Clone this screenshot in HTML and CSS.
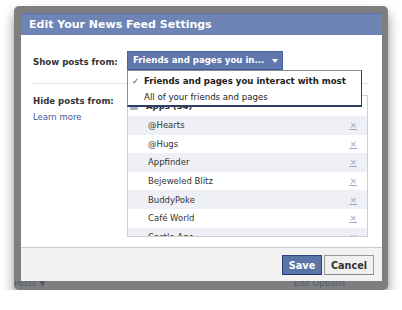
FILE: index.html
```html
<!DOCTYPE html>
<html>
<head>
<meta charset="utf-8">
<link rel="stylesheet" href="styles.css">
</head>
<body>
<div class="frame">
  <div class="dialog">
    <div class="dialog-header">Edit Your News Feed Settings</div>
    <div class="dialog-body">
      <div class="row row-show">
        <div class="label">Show posts from:</div>
        <div class="select-btn"><span>Friends and pages you in...</span><span class="arrow"></span></div>
      </div>
      <div class="sep"></div>
      <div class="row row-hide">
        <div class="side">
          <div class="label label-hide">Hide posts from:</div>
          <a class="learn">Learn more</a>
        </div>
        <div class="list">
          <div class="list-head"><span class="app-ico"></span>Apps (34)</div>
          <div class="item alt"><span>@Hearts</span><span class="x">×</span></div>
          <div class="item"><span>@Hugs</span><span class="x">×</span></div>
          <div class="item alt"><span>Appfinder</span><span class="x">×</span></div>
          <div class="item"><span>Bejeweled Blitz</span><span class="x">×</span></div>
          <div class="item alt"><span>BuddyPoke</span><span class="x">×</span></div>
          <div class="item"><span>Café World</span><span class="x">×</span></div>
          <div class="item alt"><span>Castle Age</span><span class="x">×</span></div>
        </div>
      </div>
      <div class="menu">
        <div class="menu-item checked"><span class="check">✓</span>Friends and pages you interact with most</div>
        <div class="menu-item">All of your friends and pages</div>
      </div>
    </div>
    <div class="dialog-footer">
      <button class="btn btn-save">Save</button>
      <button class="btn btn-cancel">Cancel</button>
    </div>
  </div>
  <div class="under">
    <span class="under-posts">Posts ▼</span>
    <span class="under-edit">Edit Options</span>
  </div>
</div>
</body>
</html>
```
FILE: styles.css
```css
html, body {
  margin: 0;
  padding: 0;
  background: #fff;
}
body {
  font-family: "DejaVu Sans", Verdana, sans-serif;
  color: #333;
}
.frame {
  margin: 6px 0 0 14px;
  width: 374px;
  height: 284px;
  background: #7e7e7e;
  border-radius: 5px;
  box-shadow: 0 7px 12px rgba(0, 0, 0, 0.45);
  display: flex;
  flex-direction: column;
  overflow: hidden;
}
.dialog {
  margin: 7px 6px 0 7px;
  height: 268px;
  background: #fff;
  display: flex;
  flex-direction: column;
}
.dialog-header {
  height: 22px;
  box-sizing: border-box;
  background: #6d84b4;
  border-top: 1px solid #5b73a8;
  color: #fff;
  font-weight: bold;
  font-size: 11px;
  line-height: 21px;
  padding-left: 8px;
}
.dialog-body {
  position: relative;
  padding: 16px 14px 0 12px;
}
.row {
  display: flex;
}
.label {
  width: 94px;
  font-weight: bold;
  font-size: 8.6px;
  color: #333;
}
.row-show .label {
  line-height: 22px;
}
.select-btn {
  width: 156px;
  height: 19px;
  box-sizing: border-box;
  background: #5f77aa;
  border: 1px solid #4a62a0;
  border-bottom-color: #3b5998;
  color: #fff;
  font-weight: bold;
  font-size: 8.6px;
  line-height: 17px;
  padding-left: 5px;
  display: flex;
  align-items: center;
}
.arrow {
  margin-left: 8px;
  width: 0;
  height: 0;
  border-left: 3.5px solid transparent;
  border-right: 3.5px solid transparent;
  border-top: 4px solid #fff;
}
.sep {
  margin-top: 10px;
  border-top: 1px solid #e2e2e2;
  height: 0;
}
.row-hide {
  margin-top: 11px;
}
.side {
  width: 94px;
  padding-top: 0;
}
.label-hide {
  line-height: 12px;
}
.learn {
  display: block;
  margin-top: 4px;
  color: #3b5998;
  font-size: 8.5px;
  line-height: 12px;
}
.list {
  width: 241px;
  height: 142px;
  box-sizing: border-box;
  border: 1px solid #cfcfcf;
  overflow: hidden;
  font-size: 8.5px;
}
.list-head {
  height: 20px;
  display: flex;
  align-items: center;
  font-weight: bold;
  color: #333;
  padding-left: 2px;
}
.app-ico {
  width: 8px;
  height: 7px;
  margin-right: 8px;
  background: #aab2c6;
  border-radius: 1px;
}
.item {
  height: 18.6px;
  display: flex;
  align-items: center;
  justify-content: space-between;
  padding: 0 10px 0 20px;
  color: #333;
}
.item.alt {
  background: #eef0f5;
}
.x {
  color: #9aa3bd;
  text-decoration: underline;
  font-size: 9px;
}
.menu {
  position: absolute;
  top: 35px;
  left: 106px;
  width: 235px;
  height: 37px;
  box-sizing: border-box;
  background: #fff;
  border: 1px solid #8c8c8c;
  border-right-color: #2e3f66;
  border-bottom: 2px solid #2e3f66;
  padding-top: 2px;
}
.menu-item {
  height: 16px;
  line-height: 16px;
  font-size: 8.6px;
  padding-left: 16px;
  position: relative;
  color: #222;
}
.menu-item.checked {
  font-weight: bold;
}
.check {
  position: absolute;
  left: 4px;
  font-weight: normal;
  color: #555;
}
.dialog-footer {
  margin-top: auto;
  height: 34px;
  box-sizing: border-box;
  background: #f2f2f2;
  border-top: 1px solid #cccccc;
  display: flex;
  justify-content: flex-end;
  align-items: flex-start;
  gap: 2px;
  padding: 7px 8px 0 0;
}
.btn {
  height: 20px;
  box-sizing: border-box;
  font-family: "DejaVu Sans", Verdana, sans-serif;
  font-weight: bold;
  font-size: 9.7px;
  padding: 0;
  margin: 0;
}
.btn-save {
  width: 40px;
  background: #5b74a8;
  border: 1px solid #29447e;
  border-bottom-color: #1a356e;
  color: #fff;
}
.btn-cancel {
  width: 50px;
  background: #f0f0f0;
  border: 1px solid #999;
  border-bottom-color: #888;
  color: #333;
}
.under {
  height: 8px;
  overflow: hidden;
  display: flex;
  font-size: 8.5px;
  color: #515a70;
}
.under span {
  display: block;
  margin-top: -4px;
  line-height: 12px;
}
.under-edit {
  margin-left: 248px;
}
```
